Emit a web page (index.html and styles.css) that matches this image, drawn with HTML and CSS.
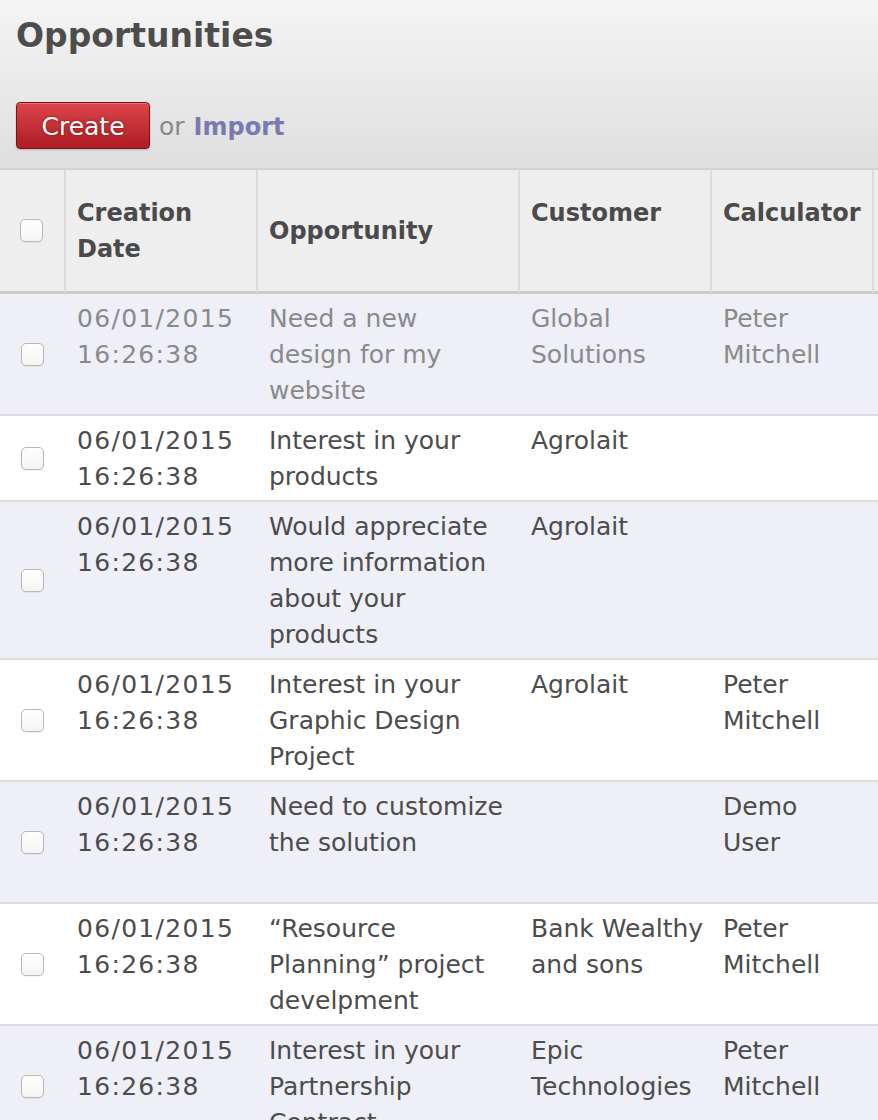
FILE: index.html
```html
<!DOCTYPE html>
<html lang="en">
<head>
<meta charset="utf-8">
<title>Opportunities</title>
<link rel="stylesheet" href="styles.css">
</head>
<body>
<header class="page-head">
  <h1 class="title">Opportunities</h1>
  <div class="actions">
    <button class="btn-create" type="button">Create</button>
    <span class="or">or</span>
    <a class="import" href="#">Import</a>
  </div>
</header>
<table class="list">
  <colgroup>
    <col class="c-check">
    <col class="c-date">
    <col class="c-opp">
    <col class="c-cust">
    <col class="c-calc">
    <col class="c-more">
  </colgroup>
  <thead>
    <tr>
      <th class="th-check"><input type="checkbox" class="cb"></th>
      <th>Creation Date</th>
      <th>Opportunity</th>
      <th class="th-raised">Customer</th>
      <th class="th-raised">Calculator</th>
      <th class="th-more"></th>
    </tr>
  </thead>
  <tbody>
    <tr class="odd muted">
      <td class="td-check"><input type="checkbox" class="cb"></td>
      <td class="td-date">06/01/2015 16:26:38</td>
      <td class="td-opp">Need a new design for my website</td>
      <td>Global Solutions</td>
      <td class="td-calc">Peter Mitchell</td>
      <td></td>
    </tr>
    <tr>
      <td class="td-check"><input type="checkbox" class="cb"></td>
      <td class="td-date">06/01/2015 16:26:38</td>
      <td class="td-opp">Interest in your products</td>
      <td>Agrolait</td>
      <td class="td-calc"></td>
      <td></td>
    </tr>
    <tr class="odd">
      <td class="td-check"><input type="checkbox" class="cb"></td>
      <td class="td-date">06/01/2015 16:26:38</td>
      <td class="td-opp">Would appreciate more information about your products</td>
      <td>Agrolait</td>
      <td class="td-calc"></td>
      <td></td>
    </tr>
    <tr>
      <td class="td-check"><input type="checkbox" class="cb"></td>
      <td class="td-date">06/01/2015 16:26:38</td>
      <td class="td-opp">Interest in your Graphic Design Project</td>
      <td>Agrolait</td>
      <td class="td-calc">Peter Mitchell</td>
      <td></td>
    </tr>
    <tr class="odd row-tall">
      <td class="td-check"><input type="checkbox" class="cb"></td>
      <td class="td-date">06/01/2015 16:26:38</td>
      <td class="td-opp">Need to customize the solution</td>
      <td></td>
      <td class="td-calc">Demo User</td>
      <td></td>
    </tr>
    <tr>
      <td class="td-check"><input type="checkbox" class="cb"></td>
      <td class="td-date">06/01/2015 16:26:38</td>
      <td class="td-opp">“Resource Planning” project develpment</td>
      <td>Bank Wealthy and sons</td>
      <td class="td-calc">Peter Mitchell</td>
      <td></td>
    </tr>
    <tr class="odd">
      <td class="td-check"><input type="checkbox" class="cb"></td>
      <td class="td-date">06/01/2015 16:26:38</td>
      <td class="td-opp">Interest in your Partnership Contract</td>
      <td>Epic Technologies</td>
      <td class="td-calc">Peter Mitchell</td>
      <td></td>
    </tr>
  </tbody>
</table>
</body>
</html>
```
FILE: styles.css
```css
html, body {
  margin: 0;
  padding: 0;
  overflow: hidden;
  background: #ffffff;
}

body {
  font-family: "DejaVu Sans", "Open Sans", sans-serif;
  color: #4c4c4c;
}

.page-head {
  background: linear-gradient(#f4f4f4, #dfdfdf);
  padding: 16px 16px 19px 16px;
}

.title {
  margin: 0;
  font-size: 33px;
  line-height: 40px;
  font-weight: bold;
  color: #4d4d4d;
  text-shadow: 0 1px 0 #ffffff;
}

.actions {
  display: flex;
  align-items: center;
  margin-top: 46px;
}

.btn-create {
  box-sizing: border-box;
  width: 134px;
  height: 47px;
  padding: 2px 0 0 0;
  border: 1px solid #7c1217;
  border-radius: 4px;
  background: linear-gradient(#dc444b, #ad1d24);
  color: #ffffff;
  font-family: "DejaVu Sans", "Open Sans", sans-serif;
  font-size: 25px;
  line-height: 36px;
  text-shadow: 0 0 3px rgba(90, 0, 0, 0.6);
  box-shadow: inset 0 1px 0 rgba(255, 255, 255, 0.25), 0 1px 2px rgba(0, 0, 0, 0.2);
}

.or {
  margin-left: 9px;
  padding-top: 2px;
  font-size: 25px;
  line-height: 36px;
  color: #8a8a8a;
}

.import {
  margin-left: 9px;
  padding-top: 2px;
  font-size: 24px;
  line-height: 36px;
  font-weight: bold;
  color: #7a7ab0;
  text-decoration: none;
}

.list {
  table-layout: fixed;
  border-collapse: separate;
  border-spacing: 0;
  width: 878px;
  font-size: 25px;
  line-height: 36px;
}

.c-check { width: 66px; }
.c-date { width: 192px; }
.c-opp { width: 262px; }
.c-cust { width: 192px; }
.c-calc { width: 162px; }
.c-more { width: 4px; }

.list th {
  box-sizing: border-box;
  height: 126px;
  padding: 0 2px 0 11px;
  background: #eeeeee;
  border-top: 2px solid #d2d2d2;
  border-bottom: 3px solid #cbcbcb;
  border-right: 2px solid #dcdcdc;
  text-align: left;
  vertical-align: middle;
  font-size: 24px;
  font-weight: bold;
  color: #4a4a4a;
  white-space: normal;
}

.list th.th-raised {
  padding-bottom: 36px;
  white-space: nowrap;
}

.list th.th-check {
  padding: 0;
  text-align: center;
}

.list th.th-more {
  padding: 0;
  border-right: none;
}

.list td {
  box-sizing: border-box;
  padding: 7px 2px 5px 11px;
  border-bottom: 2px solid #dcdcdc;
  vertical-align: top;
}

.list td.td-check {
  padding: 0 2px 0 0;
  text-align: center;
  vertical-align: middle;
}

.list td.td-date {
  letter-spacing: 1.3px;
}

.list td.td-opp {
  padding-right: 15px;
}

.list td.td-calc {
  padding-right: 16px;
}

.list tr.odd td {
  background: #eeeff7;
}

.list tr.muted td {
  color: #8a8a8a;
}

.list tr.row-tall {
  height: 122px;
}

.cb {
  -webkit-appearance: none;
  appearance: none;
  display: block;
  margin: 0 auto;
  width: 23px;
  height: 23px;
  box-sizing: border-box;
  border: 1px solid #b8b8b8;
  border-radius: 5px;
  background: linear-gradient(#ffffff, #f4f4f4);
  box-shadow: 0 1px 1px rgba(0, 0, 0, 0.06);
}

.th-check .cb {
  margin-left: 20px;
}
```
